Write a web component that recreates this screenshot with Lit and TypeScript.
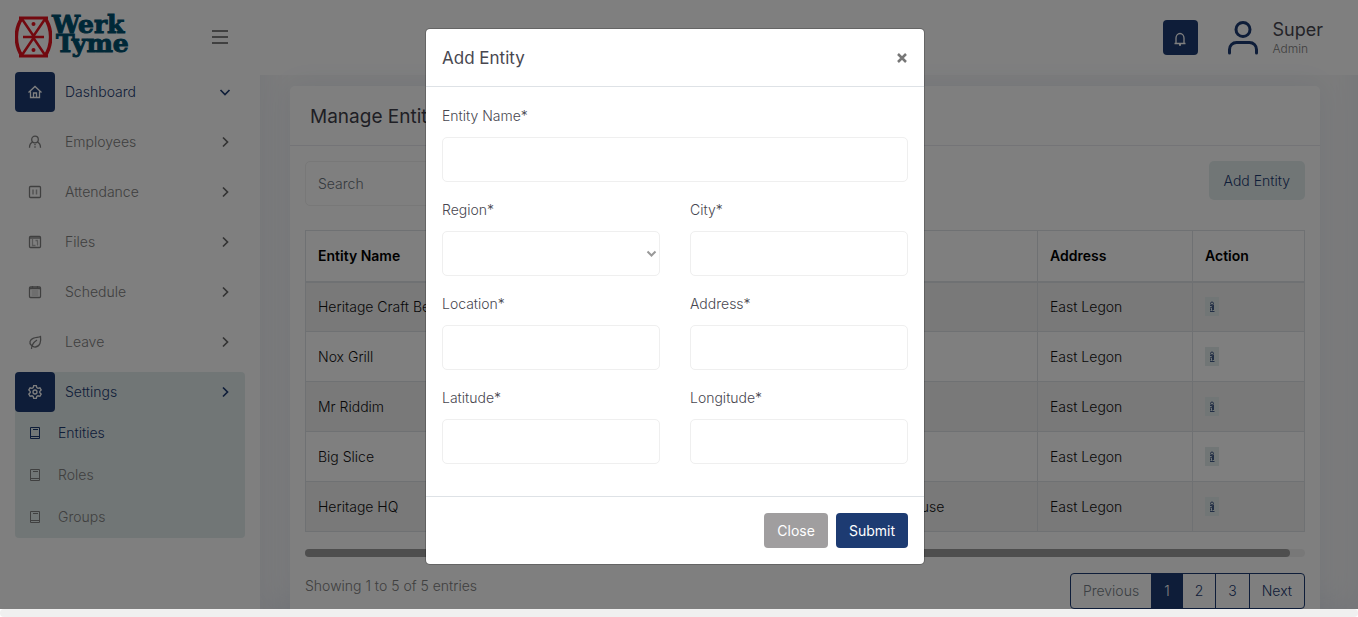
import { LitElement, html, css, svg } from "lit";
import { customElement, property } from "lit/decorators.js";
import { classMap } from "lit/directives/class-map.js";

const icons: Record<string, unknown> = {
  home: svg`<path d="M1.500 8.500 8 2.500l6.500 6M3.500 7.500v6h9v-6M6.500 13.500V9h3v4.500"/>`,
  employees: svg`<circle cx="8" cy="5.500" r="3.300"/><path d="M5.500 8.200C3.500 9 2.500 11 2.500 13.800M10.500 8.200c2 .8 3 2.800 3 5.600M8 10v1.200M8 12.300v1.500"/>`,
  attendance: svg`<rect x="2.500" y="2.500" width="11" height="11" rx="1"/><path d="M6 5.500v5M9.500 5.500v5" stroke-width="1.500" opacity=".7"/>`,
  files: svg`<rect x="2.500" y="2.500" width="11" height="11" rx="1"/><path d="M2.500 4h11"/><path d="M5.500 5v6.500h3M8.500 6.500h2.500M10.500 6.500v5" opacity=".6"/>`,
  schedule: svg`<rect x="2.500" y="3" width="11" height="10.500" rx="1"/><path d="M2.500 4.500h11M5.500 2v2.500M10.500 2v2.500"/><path d="M4.500 7h7M4.500 9h7M4.500 11h7" opacity=".35"/>`,
  leave: svg`<path d="M4.500 15C4.500 11 7 8 10 6M4.500 11.500C1.500 9 3 5.500 6.500 4.200c2.500-1 5-.7 7-1.700.8 5-.5 10-5 10.500-1.500.2-2.800-.4-4-1.500z"/>`,
  settings: svg`<circle cx="8" cy="8" r="2"/><path d="M6.700 1.700h2.600l.5 1.900 1.200.7 1.900-.5 1.300 2.200-1.400 1.400v1.300l1.400 1.400-1.300 2.200-1.900-.5-1.200.7-.5 1.900H6.700l-.5-1.900-1.200-.7-1.900.5-1.300-2.200 1.400-1.400V7.400L1.800 6l1.300-2.200 1.900.5 1.200-.7z"/>`,
  book: svg`<path d="M3.500 2.500h9v11h-9zM3.500 11.500h9M6 4.500h5" stroke-width="1"/>`,
  bell: svg`<path d="M2.500 12.500h11M4 12.500V7a4 4.500 0 0 1 8 0v5.500M7 14h2"/>`,
  right: svg`<path d="m6 3.500 4.500 4.500L6 12.500" stroke-width="1.700"/>`,
  down: svg`<path d="m3.500 6 4.500 4.500L12.500 6" stroke-width="1.700"/>`,
};

const icon = (name: string) => html`<svg class="icon" viewBox="0 0 16 16" aria-hidden="true">${icons[name]}</svg>`;

const iconStyles = css`
  .icon { display: block; width: 16px; height: 16px; fill: none; stroke: currentColor; stroke-width: 1.3; }
`;

const base = css`
  * { box-sizing: border-box; }
  button, input, select { font: inherit; margin: 0; }
  a { color: inherit; text-decoration: none; }
`;

@customElement("side-nav")
class SideNav extends LitElement {
  static styles = [base, iconStyles, css`
    :host { display: block; background: #fff; color: #808080; padding: 12px 15px; }
    .top { display: flex; align-items: center; height: 50px; margin-bottom: 10px; }
    .brand { display: flex; align-items: center; height: 46px; }
    .mark { width: 37px; height: 42px; }
    .name { font: 700 25px/19px "DejaVu Serif", serif; color: #00506f; -webkit-text-stroke: 1px #00506f; padding-bottom: 6px; }
    .name span { display: block; }
    .name span + span { padding-left: 4px; }
    .menu { margin-left: auto; margin-right: 17px; padding: 0; border: 0; background: none; display: grid; gap: 4px; width: 16px; }
    .menu i { height: 2px; background: #808080; }
    nav { display: grid; gap: 10px; }
    .item { display: flex; align-items: center; height: 40px; padding-right: 12px; }
    .item > .icon:last-child { margin-left: auto; color: #666; }
    .box { width: 40px; height: 40px; margin-right: 10px; border-radius: 4px; display: grid; place-items: center; }
    .item.active, .sub.active { color: #1d3b72; }
    .item.active > .icon:last-child { color: #1d3b72; }
    .active .box { background: #1d3b72; color: #fff; }
    .group { background: #e3eded; border-radius: 4px; }
    .sub { display: flex; align-items: center; height: 42px; padding-left: 12px; gap: 15px; }
  `];

  private item(label: string, name: string, active = false, arrow = "right") {
    return html`<a href="#" class=${classMap({ item: true, active })}>
      <span class="box">${icon(name)}</span><span>${label}</span>${icon(arrow)}
    </a>`;
  }

  render() {
    return html`
      <div class="top">
        <a href="#" class="brand">
          <svg class="mark" viewBox="0 0 37 42" fill="none" stroke="#e5121f" stroke-width="3" aria-hidden="true">
            <path d="M4 2h29M4 40h29"/>
            <path d="M7 2C-.5 13-.5 29 7 40M30 2c7.500 11 7.500 27 0 38" stroke-width="3.500"/>
            <path d="M7 3 18.500 20 30 3M7 39l11.500-17L30 39M8 21h21" stroke-width="2.500"/>
            <circle cx="18.500" cy="8" r="2" fill="#e5121f" stroke="none"/>
            <circle cx="18.500" cy="34" r="2" fill="#e5121f" stroke="none"/>
          </svg>
          <span class="name"><span>Werk</span><span>Tyme</span></span>
        </a>
        <button class="menu" aria-label="Toggle menu"><i></i><i></i><i></i></button>
      </div>
      <nav>
        ${this.item("Dashboard", "home", true, "down")}
        ${this.item("Employees", "employees")}
        ${this.item("Attendance", "attendance")}
        ${this.item("Files", "files")}
        ${this.item("Schedule", "schedule")}
        ${this.item("Leave", "leave")}
        <div class="group">
          ${this.item("Settings", "settings", true)}
          ${["Entities", "Roles", "Groups"].map((label, i) => html`
            <a href="#" class=${classMap({ sub: true, active: i === 0 })}>${icon("book")}<span>${label}</span></a>`)}
        </div>
      </nav>`;
  }
}

@customElement("top-bar")
class TopBar extends LitElement {
  static styles = [base, iconStyles, css`
    :host { display: flex; align-items: center; justify-content: flex-end; height: 75px; padding-right: 35px; background: #fff; }
    .bell { width: 35px; height: 35px; margin-right: 30px; padding: 3px 0 0; border: 0; border-radius: 4px; background: #1d3b72; color: #fff; display: grid; place-items: center; }
    .user { display: flex; align-items: center; gap: 15px; }
    .avatar { width: 30px; height: 34px; fill: none; stroke: #1d3b72; stroke-width: 3; stroke-linecap: round; }
    .name { font-size: 18px; line-height: 22px; font-weight: 400; color: #484750; }
    .role { font-size: 12px; line-height: 16px; color: #808080; }
  `];

  render() {
    return html`
      <button class="bell" aria-label="Notifications">${icon("bell")}</button>
      <a href="#" class="user">
        <svg class="avatar" viewBox="0 0 30 34" aria-hidden="true"><circle cx="15" cy="8.500" r="7"/><path d="M1.500 32v-3.500a7 7 0 0 1 7-7h13a7 7 0 0 1 7 7V32"/></svg>
        <span><div class="name">Super</div><div class="role">Admin</div></span>
      </a>`;
  }
}

const rows = [
  ["Heritage Craft Beer", "Greater Accra", "Pub"],
  ["Nox Grill", "Greater Accra", "Grill"],
  ["Mr Riddim", "Greater Accra", "Lounge"],
  ["Big Slice", "Greater Accra", "Pizza"],
  ["Heritage HQ", "Greater Accra", "Spintex House"],
];

@customElement("entity-card")
class EntityCard extends LitElement {
  static styles = [base, css`
    :host { display: block; background: #fff; border-radius: 5px; box-shadow: 0 0 31px 3px rgba(44, 80, 160, 0.08); }
    h1 { margin: 0; padding: 16px 20px 14px; font-size: 19px; line-height: 29px; font-weight: 400; color: #3f3e4a; border-bottom: 1px solid #e8e8ee; }
    .body { padding: 15px; }
    .tools { display: flex; justify-content: space-between; align-items: flex-start; margin-bottom: 24px; }
    .search { width: 220px; height: 45px; padding: 0 12px; border: 1px solid #f0f0f0; border-radius: 5px; background: none; color: #6c757d; }
    .search::placeholder { color: #6c757d; opacity: 1; }
    .add { height: 39px; padding: 0 15px; border: 0; border-radius: 5px; background: #e3eded; color: #1d3b72; }
    table { width: 100%; table-layout: fixed; border-collapse: collapse; color: #111; }
    .address { width: 155px; }
    .action { width: 112px; }
    .location { width: 200px; }
    th, td { padding: 0 12px; text-align: left; border: 1px solid #dee2e6; }
    td { height: 50px; }
    th { height: 51px; font-weight: 600; border-bottom-width: 2px; color: #000; }
    tbody tr:nth-child(odd) { background: #f2f2f2; }
    .edit { display: block; width: 14px; height: 19px; padding: 0; border: 0; background: #e3eded; }
    .edit svg { display: block; width: 14px; height: 19px; fill: none; stroke: #1d3b72; opacity: .8; }
    .track { height: 8px; margin: 17px 0 16px; border-radius: 4px; background: #f1f1f1; }
    .thumb { width: 98.5%; height: 8px; border-radius: 4px; background: #9c9c9c; }
    .foot { display: flex; justify-content: space-between; align-items: flex-start; color: #808080; line-height: 20px; }
    .foot p { margin: 0; padding-top: 3px; }
    .pages { display: flex; height: 36px; border: 1px solid #1d3b72; border-radius: 4px; color: #1d3b72; }
    .pages a { padding: 7px 12px; }
    .pages a + a { border-left: 1px solid #1d3b72; }
    .pages .prev { color: #777f87; }
    .pages .current { background: #1d3b72; color: #fff; }
  `];

  render() {
    return html`
      <h1>Manage Entities</h1>
      <div class="body">
        <div class="tools">
          <input class="search" type="search" placeholder="Search" aria-label="Search">
          <button class="add">Add Entity</button>
        </div>
        <table>
          <thead><tr><th>Entity Name</th><th>Region</th><th class="location">Location</th><th class="address">Address</th><th class="action">Action</th></tr></thead>
          <tbody>
            ${rows.map((row) => html`<tr>
              ${row.map((cell) => html`<td>${cell}</td>`)}<td>East Legon</td>
              <td><button class="edit" aria-label="Edit"><svg viewBox="0 0 14 19"><circle cx="7" cy="6.500" r="1.500"/><path d="M5 8.500h2.500v5M5 11l2-1M5 14.500h4.500M5.500 11.500v2M8.500 8v5"/></svg></button></td>
            </tr>`)}
          </tbody>
        </table>
        <div class="track"><div class="thumb"></div></div>
        <div class="foot">
          <p>Showing 1 to 5 of 5 entries</p>
          <div class="pages">
            <a href="#" class="prev">Previous</a><a href="#" class="current">1</a><a href="#">2</a><a href="#">3</a><a href="#">Next</a>
          </div>
        </div>
      </div>`;
  }
}

@customElement("entity-dialog")
class EntityDialog extends LitElement {
  static styles = [base, css`
    :host { display: block; width: 500px; max-width: 100%; background: #fff; background-clip: padding-box; border: 1px solid rgba(0, 0, 0, 0.2); border-radius: 5px; color: #484750; }
    header { display: flex; align-items: center; justify-content: space-between; height: 58px; padding: 0 16px; border-bottom: 1px solid #dee2e6; }
    h2 { margin: 0; font-size: 17px; font-weight: 400; }
    .x { width: 12px; height: 12px; padding: 0; border: 0; background: none; }
    .x svg { display: block; width: 12px; height: 12px; stroke: #777; stroke-width: 2.500; }
    .fields { display: grid; grid-template-columns: 1fr 1fr; gap: 16px 30px; padding: 17px 16px 32px; }
    .field { display: grid; gap: 9px; }
    .wide { grid-column: 1 / -1; }
    label { line-height: 24px; }
    .control { width: 100%; height: 45px; padding: 0 12px; border: 1px solid #efefef; border-radius: 5px; background: #fff; color: inherit; }
    .pick { position: relative; display: grid; }
    select { appearance: none; }
    .caret { position: absolute; right: 3px; top: 18px; width: 11px; height: 9px; fill: none; stroke: #999; stroke-width: 2; pointer-events: none; }
    footer { display: flex; justify-content: flex-end; gap: 8px; padding: 16px; border-top: 1px solid #dee2e6; }
    footer button { height: 35px; padding: 0 13px; border: 0; border-radius: 4px; color: #fff; font-weight: 400; background: #1d3b72; }
    footer .close { background: #a09e9f; }
  `];

  private field(label: string) {
    const id = label.toLowerCase().replace(" ", "-");
    return html`<div class=${classMap({ field: true, wide: label === "Entity Name" })}>
      <label for=${id}>${label}*</label>
      ${label === "Region"
        ? html`<div class="pick"><select class="control" id=${id}><option></option></select>
            <svg class="caret" viewBox="0 0 11 9" aria-hidden="true"><path d="m1.500 2.500 4 4 4-4"/></svg></div>`
        : html`<input class="control" id=${id} type="text">`}
    </div>`;
  }

  render() {
    return html`
      <header><h2>Add Entity</h2><button class="x" aria-label="Dismiss"><svg viewBox="0 0 12 12"><path d="m2 2 8 8M10 2l-8 8"/></svg></button></header>
      <div class="fields">
        ${["Entity Name", "Region", "City", "Location", "Address", "Latitude", "Longitude"].map((l) => this.field(l))}
      </div>
      <footer><button class="close">Close</button><button>Submit</button></footer>`;
  }
}

@customElement("app-root")
class AppRoot extends LitElement {
  @property({ type: Boolean }) open = true;

  static styles = [base, css`
    :host { display: grid; grid-template-rows: minmax(0, 1fr) 8px; height: 100vh; background: #fff; font: 300 14px/20px Inter, "Noto Sans", sans-serif; }
    .view { position: relative; overflow: hidden; display: grid; grid-template-columns: 260px minmax(0, 1fr); background: #f9f9f9; }
    .main { box-shadow: inset 0 0 31px 3px rgba(44, 80, 160, 0.08); overflow: hidden; }
    entity-card { margin: 11px 38px 0 30px; }
    .overlay { position: absolute; inset: 0; background: rgba(0, 0, 0, 0.5); display: flex; justify-content: center; align-items: flex-start; padding: 28px 8px 0 0; }
    .scrollbar { background: #f0f0f0; border-radius: 4px; }
  `];

  render() {
    return html`
      <div class="view">
        <side-nav></side-nav>
        <div class="main"><top-bar></top-bar><entity-card></entity-card></div>
        ${this.open ? html`<div class="overlay"><entity-dialog role="dialog" aria-label="Add Entity"></entity-dialog></div>` : ""}
      </div>
      <div class="scrollbar"></div>`;
  }
}
